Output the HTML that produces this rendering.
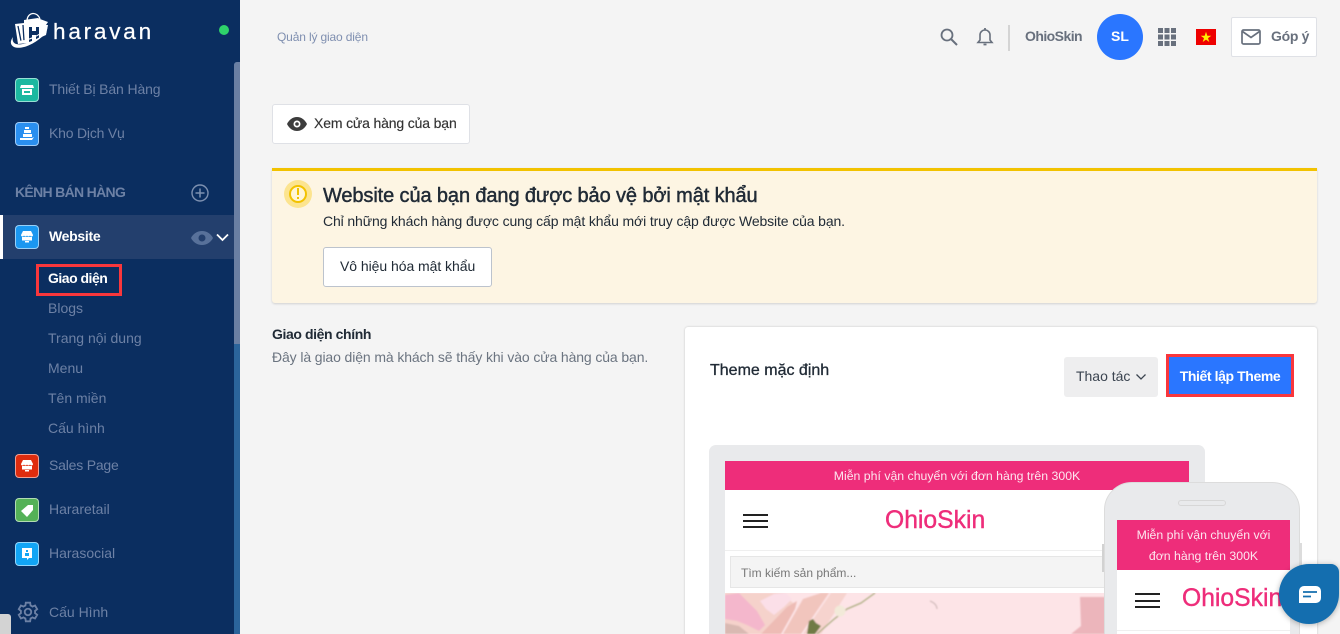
<!DOCTYPE html>
<html lang="vi"><head><meta charset="utf-8"><title>Haravan</title>
<style>
html,body{margin:0;padding:0;width:1340px;height:634px;overflow:hidden;background:#f4f4f4;font-family:"Liberation Sans",sans-serif}
#r{position:relative;width:1340px;height:634px;overflow:hidden}
.a,.t{position:absolute}
.t{white-space:nowrap;line-height:20px}
.m{color:#6d81a5;font-size:14px}
.ic{position:absolute;left:15px;width:24px;height:24px;border-radius:4px;box-sizing:border-box;border:1px solid rgba(255,255,255,.55)}
.ic svg{position:absolute;left:3px;top:3px}
</style></head><body><div id="r">
<!-- sidebar -->
<div class="a" style="left:0;top:0;width:240px;height:634px;background:#0b2e60"></div>
<div class="a" style="left:234px;top:62px;width:6px;height:572px;background:#2b649b;border-radius:3px 0 0 0"></div>
<div class="a" style="left:234px;top:62px;width:6px;height:282px;background:#6a7fa3;border-radius:3px 0 0 0"></div>
<div class="a" style="left:0;top:215px;width:234px;height:44px;background:#233f6d"></div>
<div class="a" style="left:0;top:215px;width:3px;height:44px;background:#fff"></div>
<svg class="a" style="left:10px;top:12px" width="42" height="38" viewBox="0 0 42 38">
<path d="M5 12l9-1 0-3 14-2 2 1 8 3-2 3 2 0-2 10-18 8-10 1z" fill="#fff"/>
<path d="M17 8c1-8 10-9 13-1" fill="none" stroke="#fff" stroke-width="1.200"/>
<path d="M8 14l3 15M13 13l1 16" stroke="#0b2e60" stroke-width="1.300"/>
<path d="M19 15h3v4h4v-4h3v12l-3 1v-5h-4v6l-3 1z" fill="#0b2e60"/>
<path d="M3 25c-3 4-3 8 1 10 8 3 22-3 33-15-10 8-24 14-31 12-3-1-4-4-3-7z" fill="#fff"/>
<path d="M38 16c-8 8-22 15-31 13 9 0 22-6 31-13z" fill="#fff"/>
</svg>
<div class="t" style="left:53px;top:18px;color:#fff;font-size:22.500px;line-height:28px;letter-spacing:2.800px;-webkit-text-stroke:.25px #fff">haravan</div>
<div class="a" style="left:219px;top:25px;width:10px;height:10px;border-radius:50%;background:#2fd36a"></div>

<div class="ic" style="top:78px;background:#1cb8a0"><svg width="16" height="16" viewBox="0 0 16 16"><path d="M2 3h12l1 3H1zM3 7h10v6H3z" fill="#fff"/><path d="M5 9h6v2H5z" fill="#1cb8a0"/></svg></div>
<div class="t m" style="left:49px;top:79px;letter-spacing:-.13px">Thiết Bị Bán Hàng</div>
<div class="ic" style="top:122px;background:#2a8ff0"><svg width="16" height="16" viewBox="0 0 16 16"><path d="M6 1h4v2H6zM5 4h7v3H5zM4 8h9v3H4zM1 12h12l2-1-2 3H1z" fill="#fff"/></svg></div>
<div class="t m" style="left:49px;top:123px;letter-spacing:-.2px">Kho Dịch Vụ</div>
<div class="t" style="left:15px;top:182px;color:#6d81a5;font-size:14px;font-weight:bold;letter-spacing:-.68px">KÊNH BÁN HÀNG</div>
<svg class="a" style="left:191px;top:184px" width="18" height="18" viewBox="0 0 18 18"><circle cx="9" cy="9" r="8" fill="none" stroke="#7d90b0" stroke-width="1.400"/><path d="M9 4.500v9M4.500 9h9" stroke="#7d90b0" stroke-width="1.500"/></svg>

<div class="ic" style="top:225px;background:#1a97f0"><svg width="16" height="16" viewBox="0 0 16 16"><path d="M4 2h8l2 4a1.500 1.500 0 0 1-3 0 1.500 1.500 0 0 1-3 0 1.500 1.500 0 0 1-3 0 1.500 1.500 0 0 1-3 0z" fill="#fff"/><path d="M3 8h10v3.500H3zM6 12h4v1.500H6z" fill="#fff"/></svg></div>
<div class="t" style="left:49px;top:226px;color:#fff;font-size:14px;font-weight:bold;letter-spacing:-.3px">Website</div>
<svg class="a" style="left:191px;top:230px" width="22" height="16" viewBox="0 0 22 16"><path fill-rule="evenodd" d="M11 1C6 1 2 4 0 8c2 4 6 7 11 7s9-3 11-7c-2-4-6-7-11-7zm0 3.500a3.500 3.500 0 1 1 0 7 3.500 3.500 0 0 1 0-7z" fill="#58719a"/></svg>
<svg class="a" style="left:216px;top:233px" width="13" height="9" viewBox="0 0 13 9"><path d="M1 1.500l5.500 5.500 5.500-5.500" fill="none" stroke="#fff" stroke-width="1.800"/></svg>

<div class="a" style="left:36px;top:264px;width:86px;height:32px;box-sizing:border-box;border:3px solid #f9373c"></div>
<div class="t" style="left:48px;top:268px;color:#fff;font-size:14px;font-weight:bold;letter-spacing:-.5px">Giao diện</div>
<div class="t m" style="left:48px;top:298px">Blogs</div>
<div class="t m" style="left:48px;top:328px">Trang nội dung</div>
<div class="t m" style="left:48px;top:358px">Menu</div>
<div class="t m" style="left:48px;top:388px">Tên miền</div>
<div class="t m" style="left:48px;top:418px">Cấu hình</div>

<div class="ic" style="top:454px;background:#df2c0e"><svg width="16" height="16" viewBox="0 0 16 16"><path d="M4 2h8l2 4a1.500 1.500 0 0 1-3 0 1.500 1.500 0 0 1-3 0 1.500 1.500 0 0 1-3 0 1.500 1.500 0 0 1-3 0z" fill="#fff"/><path d="M3 8h10v3.500H3zM6 12h4v1.500H6z" fill="#fff"/></svg></div>
<div class="t m" style="left:49px;top:455px;letter-spacing:-.2px">Sales Page</div>
<div class="ic" style="top:498px;background:#54b157"><svg width="16" height="16" viewBox="0 0 16 16"><path d="M2 9l7-6 5 0 0 5-6 7z" fill="#fff"/></svg></div>
<div class="t m" style="left:49px;top:499px">Hararetail</div>
<div class="ic" style="top:542px;background:#12a5f5"><svg width="16" height="16" viewBox="0 0 16 16"><path d="M3 2h10v10h-3l-2 2v-2H3z" fill="#fff"/><path d="M7 4h2v2H7zM6 7h4v3H6z" fill="#12a5f5"/></svg></div>
<div class="t m" style="left:49px;top:543px">Harasocial</div>
<svg class="a" style="left:14px;top:599px" width="26" height="26" viewBox="0 0 24 24"><path d="M19.400 13a7.500 7.500 0 0 0 0-2l2-1.600-2-3.400-2.400 1a7.500 7.500 0 0 0-1.700-1L14.900 3.400h-4l-.4 2.600a7.500 7.500 0 0 0-1.700 1l-2.400-1-2 3.400L6.400 11a7.500 7.500 0 0 0 0 2l-2 1.600 2 3.400 2.400-1c.5.400 1.100.7 1.700 1l.4 2.600h4l.4-2.600c.6-.3 1.200-.6 1.700-1l2.400 1 2-3.400z" fill="none" stroke="#6d81a5" stroke-width="1.700"/><circle cx="12.900" cy="12" r="3" fill="none" stroke="#6d81a5" stroke-width="1.700"/></svg>
<div class="t m" style="left:49px;top:602px">Cấu Hình</div>
<div class="a" style="left:0;top:614px;width:11px;height:20px;background:#d3d3d3;border-radius:0 3px 0 0"></div>

<!-- topbar -->
<div class="t" style="left:277px;top:27px;color:#7f8fb0;font-size:12px;letter-spacing:-.15px">Quản lý giao diện</div>
<svg class="a" style="left:939px;top:27px" width="20" height="20" viewBox="0 0 20 20"><circle cx="8" cy="8" r="5.500" fill="none" stroke="#68707d" stroke-width="1.800"/><path d="M12 12l6 6" stroke="#68707d" stroke-width="2"/></svg>
<svg class="a" style="left:976px;top:27px" width="18" height="20" viewBox="0 0 18 20"><path d="M2 15.500h14l-2-2.500V8a5 5 0 0 0-10 0v5z" fill="none" stroke="#68707d" stroke-width="1.600"/><path d="M9 1v2M7.500 17.500h3" stroke="#68707d" stroke-width="1.800"/></svg>
<div class="a" style="left:1008px;top:25px;width:2px;height:26px;background:#d4d4d4"></div>
<div class="t" style="left:1025px;top:26px;color:#68707d;font-size:14px;font-weight:bold;letter-spacing:-.55px">OhioSkin</div>
<div class="a" style="left:1097px;top:14px;width:46px;height:46px;border-radius:50%;background:#2a76ff"></div>
<div class="t" style="left:1097px;top:26px;width:46px;text-align:center;color:#fff;font-size:14px;font-weight:bold">SL</div>
<svg class="a" style="left:1158px;top:28px" width="18" height="18"><g fill="#68707d"><rect width="5" height="5"/><rect x="6.500" width="5" height="5"/><rect x="13" width="5" height="5"/><rect y="6.500" width="5" height="5"/><rect x="6.500" y="6.500" width="5" height="5"/><rect x="13" y="6.500" width="5" height="5"/><rect y="13" width="5" height="5"/><rect x="6.500" y="13" width="5" height="5"/><rect x="13" y="13" width="5" height="5"/></g></svg>
<svg class="a" style="left:1196px;top:29px" width="20" height="16" viewBox="0 0 20 16"><rect width="20" height="16" fill="#ee0000"/><path d="M10 2.800l1.300 3.900h4l-3.300 2.400 1.300 3.900-3.300-2.400-3.300 2.400 1.300-3.900-3.300-2.400h4z" fill="#ffee00"/></svg>
<div class="a" style="left:1231px;top:17px;width:86px;height:40px;box-sizing:border-box;background:#fff;border:1px solid #dfe1e6;border-radius:2px"></div>
<svg class="a" style="left:1241px;top:29px" width="20" height="16" viewBox="0 0 20 16"><rect x="1" y="1" width="18" height="14" rx="1.500" fill="none" stroke="#68707d" stroke-width="1.700"/><path d="M1.500 2.500l8.500 6 8.500-6" fill="none" stroke="#68707d" stroke-width="1.700"/></svg>
<div class="t" style="left:1271px;top:26px;color:#68707d;font-size:14px;font-weight:bold;letter-spacing:-.3px">Góp ý</div>

<!-- view store -->
<div class="a" style="left:272px;top:104px;width:198px;height:40px;box-sizing:border-box;background:#fff;border:1px solid #dfe1e6;border-radius:3px"></div>
<svg class="a" style="left:287px;top:117px" width="20" height="14" viewBox="0 0 20 14"><path fill-rule="evenodd" d="M10 0C5.500 0 2 3 0 7c2 4 5.500 7 10 7s8-3 10-7c-2-4-5.500-7-10-7zm0 3.500a3.500 3.500 0 1 1 0 7 3.500 3.500 0 0 1 0-7z" fill="#3c3c3c"/><circle cx="10" cy="7" r="1.800" fill="#3c3c3c"/></svg>
<div class="t" style="left:314px;top:113px;color:#333;font-size:14px;letter-spacing:-.15px;-webkit-text-stroke:.15px #333">Xem cửa hàng của bạn</div>

<!-- banner -->
<div class="a" style="left:272px;top:168px;width:1045px;height:135px;box-sizing:border-box;background:#fdf5e3;border-top:3px solid #f2c200;border-radius:0 0 3px 3px;box-shadow:0 1px 2px rgba(0,0,0,.15)"></div>
<div class="a" style="left:284px;top:180px;width:28px;height:28px;border-radius:50%;background:#fce48f"></div>
<div class="a" style="left:289px;top:185px;width:18px;height:18px;box-sizing:border-box;border-radius:50%;background:#fff5d6;border:2px solid #f2c200"></div>
<div class="a" style="left:297px;top:188px;width:2px;height:7px;background:#f2c200"></div>
<div class="a" style="left:297px;top:197px;width:2px;height:2px;background:#f2c200"></div>
<div class="t" style="left:323px;top:186px;color:#212b36;font-size:20px;-webkit-text-stroke:.45px #212b36;letter-spacing:-.11px">Website của bạn đang được bảo vệ bởi mật khẩu</div>
<div class="t" style="left:323px;top:211px;color:#212b36;font-size:14px;letter-spacing:-.125px">Chỉ những khách hàng được cung cấp mật khẩu mới truy cập được Website của bạn.</div>
<div class="a" style="left:323px;top:247px;width:169px;height:40px;box-sizing:border-box;background:#fff;border:1px solid #bcc3cd;border-radius:3px"></div>
<div class="t" style="left:340px;top:256px;color:#212b36;font-size:14px;letter-spacing:-.05px">Vô hiệu hóa mật khẩu</div>

<!-- left column -->
<div class="t" style="left:272px;top:324px;color:#212b36;font-size:14px;font-weight:bold;letter-spacing:-.4px">Giao diện chính</div>
<div class="t" style="left:272px;top:347px;color:#6b7480;font-size:14px;letter-spacing:-.115px">Đây là giao diện mà khách sẽ thấy khi vào cửa hàng của bạn.</div>

<!-- card -->
<div class="a" style="left:685px;top:327px;width:632px;height:320px;background:#fff;box-shadow:0 0 2px rgba(0,0,0,.2);border-radius:3px"></div>
<div class="t" style="left:710px;top:361px;color:#212b36;font-size:16px;-webkit-text-stroke:.3px #212b36;letter-spacing:0">Theme mặc định</div>
<div class="a" style="left:1064px;top:357px;width:94px;height:40px;background:#eeeeef;border-radius:3px"></div>
<div class="t" style="left:1076px;top:366px;color:#3b4450;font-size:14px;letter-spacing:-.02px">Thao tác</div>
<svg class="a" style="left:1135px;top:373px" width="12" height="8" viewBox="0 0 12 8"><path d="M1.500 1.500L6 6l4.500-4.500" fill="none" stroke="#3b4450" stroke-width="1.300"/></svg>
<div class="a" style="left:1166px;top:354px;width:128px;height:43px;box-sizing:border-box;background:#2a76ff;border:3px solid #f9373c"></div>
<div class="t" style="left:1166px;top:366px;width:128px;text-align:center;color:#fff;font-size:14px;font-weight:bold;letter-spacing:-.4px">Thiết lập Theme</div>

<!-- desktop preview -->
<div class="a" style="left:709px;top:445px;width:496px;height:200px;background:#e9eaec;border-radius:7px"></div>
<div class="a" style="left:725px;top:461px;width:464px;height:180px;background:#fff"></div>
<div class="a" style="left:725px;top:461px;width:464px;height:29px;background:#ee2d7a"></div>
<div class="t" style="left:725px;top:466px;width:464px;text-align:center;color:#fde6ef;font-size:12.300px">Miễn phí vận chuyển với đơn hàng trên 300K</div>
<div class="a" style="left:743px;top:514px;width:25px;height:2px;background:#222"></div>
<div class="a" style="left:743px;top:520px;width:25px;height:2px;background:#222"></div>
<div class="a" style="left:743px;top:526px;width:25px;height:2px;background:#222"></div>
<div class="t" style="left:885px;top:508px;line-height:26px;color:#ee2d7a;font-size:24.700px;-webkit-text-stroke:.4px #ee2d7a">OhioSkin</div>
<div class="a" style="left:725px;top:550px;width:464px;height:1px;background:#efefef"></div>
<div class="a" style="left:730px;top:556px;width:400px;height:32px;box-sizing:border-box;background:#f4f4f4;border:1px solid #e6e6e6"></div>
<div class="t" style="left:741px;top:563px;color:#777;font-size:12px">Tìm kiếm sản phẩm...</div>
<svg class="a" style="left:725px;top:593px" width="380" height="41" viewBox="0 0 380 41">
<defs><filter id="b" x="-5%" y="-20%" width="110%" height="140%"><feGaussianBlur stdDeviation=".9"/></filter></defs>
<rect width="380" height="41" fill="#fde4e7"/>
<g filter="url(#b)">
<path d="M0 41V0h60l-8 10 12-3 6 4-10 12-8 18z" fill="#f5d2cb"/>
<path d="M0 2l14-2 8 8 10 10 8 14-6 6-12-6-10-4-12-2z" fill="#f4b7cc"/>
<path d="M0 30l14 3 10 8H0z" fill="#d9b9b2"/>
<path d="M35 8l14-7 12-1 6 6-8 8-10 8-8-6z" fill="#fbdfe8"/>
<path d="M36 41L62 14 72 8l-2 8-14 25z" fill="#eebcb5"/>
<path d="M58 41L78 6 96 0h8L76 41z" fill="#f1c5bd"/>
<path d="M78 41L106 0h16L96 41z" fill="#f6d3ce"/>
<path d="M84 28l4-2 3 4 5 3-6 8h-8z" fill="#6f7a44"/>
<path d="M92 41l16-14 14-11 14-6 14-10" fill="none" stroke="#aeaf84" stroke-width="1.300"/>
<circle cx="115" cy="18" r="5.500" fill="#f2ead9"/>
<path d="M205 8c5 2 7 5 7 8" fill="none" stroke="#cdb7b7"/>
<path d="M355 4h25v37h-34l10-8z" fill="#ecb5bb"/>
</g>
</svg>

<!-- phone -->
<div class="a" style="left:1102px;top:544px;width:2px;height:28px;background:#d2d2d2"></div>
<div class="a" style="left:1300px;top:543px;width:2px;height:34px;background:#dcdcdc"></div>
<div class="a" style="left:1104px;top:482px;width:196px;height:170px;box-sizing:border-box;background:#e9eaec;border:1.500px solid #dcdcdc;border-radius:28px 28px 0 0"></div>
<div class="a" style="left:1178px;top:500px;width:48px;height:6px;box-sizing:border-box;border:1px solid #d7d7d7;border-radius:3px"></div>
<div class="a" style="left:1117px;top:520px;width:173px;height:114px;background:#fff"></div>
<div class="a" style="left:1117px;top:520px;width:173px;height:50px;background:#ee2d7a"></div>
<div class="t" style="left:1117px;top:525px;width:173px;text-align:center;color:#fde6ef;font-size:12.300px;line-height:21px">Miễn phí vận chuyển với<br>đơn hàng trên 300K</div>
<div class="a" style="left:1135px;top:593px;width:25px;height:2px;background:#222"></div>
<div class="a" style="left:1135px;top:600px;width:25px;height:2px;background:#222"></div>
<div class="a" style="left:1135px;top:606px;width:25px;height:2px;background:#222"></div>
<div class="t" style="left:1182px;top:585px;line-height:28px;color:#ee2d7a;font-size:24.700px;-webkit-text-stroke:.4px #ee2d7a">OhioSkin</div>
<div class="a" style="left:1117px;top:630px;width:173px;height:1px;background:#efefef"></div>

<!-- chat bubble -->
<div class="a" style="left:1279px;top:564px;width:60px;height:60px;background:#146eaf;border-radius:50% 8px 50% 50%;box-shadow:0 1px 6px rgba(0,0,0,.3)"></div>
<svg class="a" style="left:1298px;top:586px" width="24" height="18" viewBox="0 0 24 18"><path d="M6 0h12a5 5 0 0 1 5 5v7a5 5 0 0 1-5 5H1V5a5 5 0 0 1 5-5z" fill="#fff"/><path d="M5 6h14M5 10.500h8" stroke="#146eaf" stroke-width="1.800"/></svg>
</div></body></html>
